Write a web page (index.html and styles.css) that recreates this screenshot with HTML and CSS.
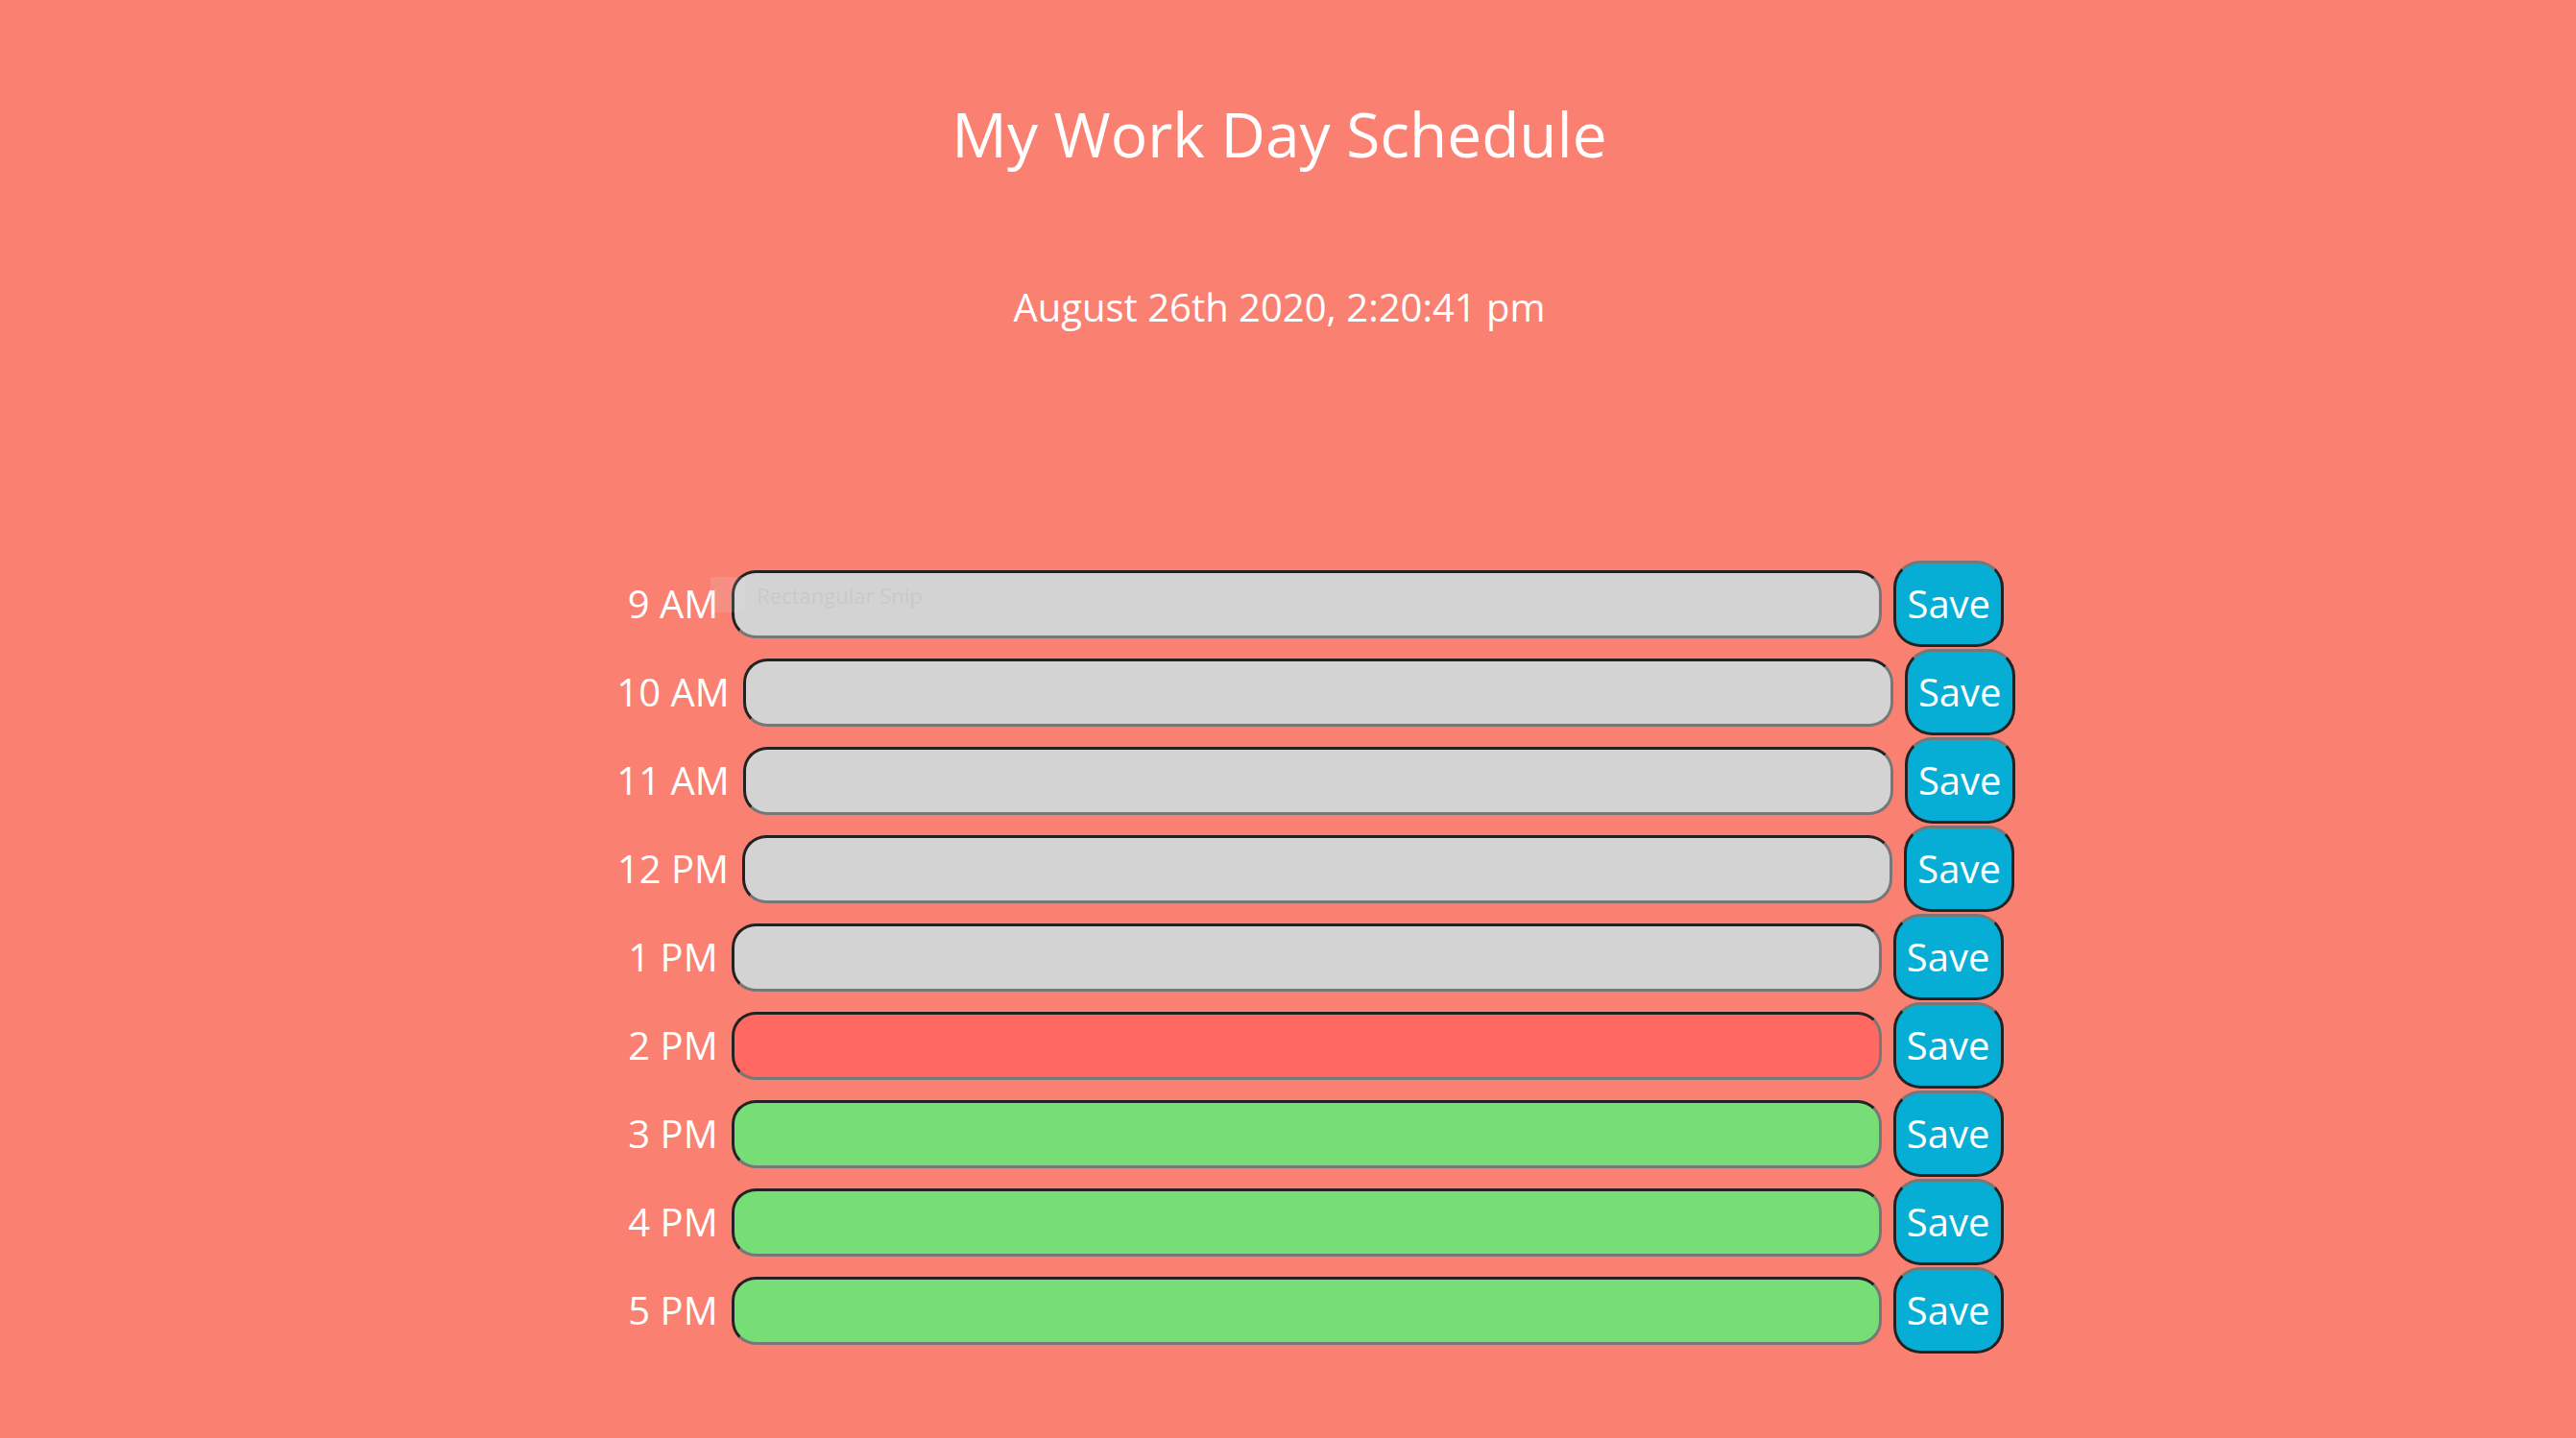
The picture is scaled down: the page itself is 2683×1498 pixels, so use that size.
FILE: index.html
```html
<!DOCTYPE html>
<html lang="en">
<head>
<meta charset="utf-8">
<title>Work Day Scheduler</title>
<link rel="stylesheet" href="styles.css">
</head>
<body>
<header class="header">
  <h1 class="title">My Work Day Schedule</h1>
  <p class="date">August 26th 2020, 2:20:41 pm</p>
</header>
<main class="schedule">
  <div class="row"><span class="hour">9 AM</span><div class="slot-wrap"><textarea class="slot past" placeholder="Rectangular Snip"></textarea><span class="snip-icon"></span></div><button class="save">Save</button></div>
  <div class="row"><span class="hour">10 AM</span><div class="slot-wrap"><textarea class="slot past"></textarea></div><button class="save">Save</button></div>
  <div class="row"><span class="hour">11 AM</span><div class="slot-wrap"><textarea class="slot past"></textarea></div><button class="save">Save</button></div>
  <div class="row"><span class="hour">12 PM</span><div class="slot-wrap"><textarea class="slot past"></textarea></div><button class="save">Save</button></div>
  <div class="row"><span class="hour">1 PM</span><div class="slot-wrap"><textarea class="slot past"></textarea></div><button class="save">Save</button></div>
  <div class="row"><span class="hour">2 PM</span><div class="slot-wrap"><textarea class="slot present"></textarea></div><button class="save">Save</button></div>
  <div class="row"><span class="hour">3 PM</span><div class="slot-wrap"><textarea class="slot future"></textarea></div><button class="save">Save</button></div>
  <div class="row"><span class="hour">4 PM</span><div class="slot-wrap"><textarea class="slot future"></textarea></div><button class="save">Save</button></div>
  <div class="row"><span class="hour">5 PM</span><div class="slot-wrap"><textarea class="slot future"></textarea></div><button class="save">Save</button></div>
</main>
</body>
</html>
```
FILE: styles.css
```css
html, body {
  margin: 0;
  padding: 0;
}
body {
  background: #fa8072;
  color: #ffffff;
  font-family: "Open Sans", "Noto Sans", sans-serif;
  min-height: 1498px;
}
.header {
  text-align: center;
  padding-top: 108px;
  padding-right: 18px;
}
.title {
  margin: 0;
  font-size: 64px;
  line-height: 64px;
  font-weight: 400;
}
.date {
  margin: 128px 0 0;
  font-size: 40px;
  line-height: 40px;
}
.schedule {
  margin-top: 244px;
  padding-left: 58px;
  display: flex;
  flex-direction: column;
  align-items: center;
  gap: 2px;
}
.row {
  display: flex;
  align-items: center;
  height: 90px;
}
.hour {
  font-size: 40px;
  line-height: 40px;
  margin-right: 14px;
  white-space: nowrap;
}
.slot-wrap {
  position: relative;
}
.slot {
  display: block;
  box-sizing: border-box;
  width: 1198px;
  height: 71px;
  margin: 0;
  padding: 12px 23px;
  border: 3px solid;
  border-color: #222222 #777777 #777777 #222222;
  border-radius: 25px;
  resize: none;
  outline: none;
  font-family: "Open Sans", "Noto Sans", sans-serif;
  font-size: 22px;
  line-height: 22px;
}
.slot::placeholder {
  color: #c9c9c9;
}
.past { background: #d3d3d3; }
.present { background: #ff6961; }
.future { background: #77dd77; }
.snip-icon {
  position: absolute;
  left: -22px;
  top: 7px;
  width: 37px;
  height: 37px;
  background: rgba(220, 225, 232, 0.15);
  pointer-events: none;
}
.save {
  box-sizing: border-box;
  width: 115px;
  height: 90px;
  margin-left: 12px;
  padding: 0;
  background: #06aed5;
  color: #ffffff;
  border: 3px solid;
  border-color: #777777 #222222 #222222 #222222;
  border-radius: 28px;
  font-family: "Open Sans", "Noto Sans", sans-serif;
  font-size: 40px;
  line-height: 40px;
  cursor: pointer;
}
```
